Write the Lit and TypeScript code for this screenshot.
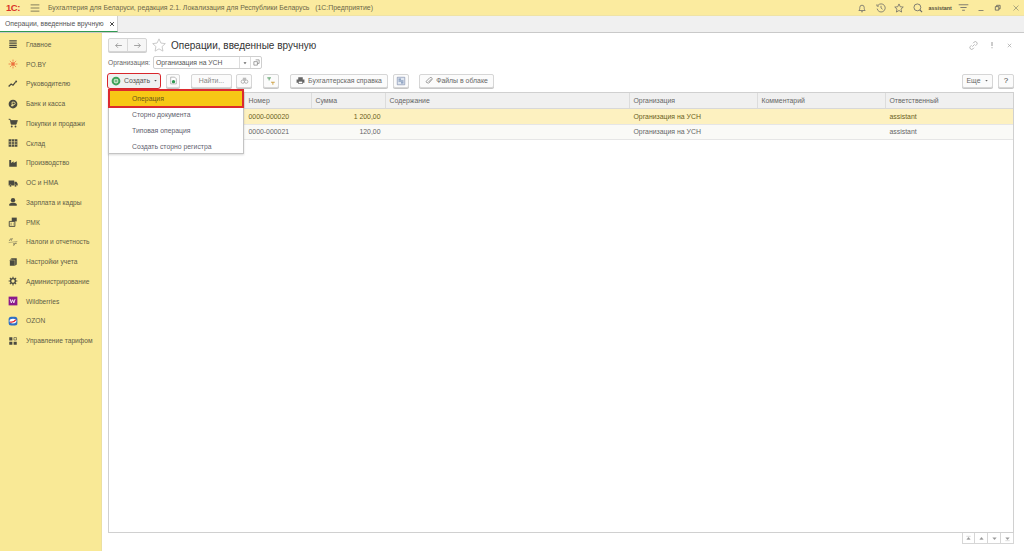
import { LitElement, html, css, svg } from "lit";
import { customElement } from "lit/decorators.js";

const ic = (body: unknown, size = 10, vb = 16) =>
  html`<svg class="ic" width=${size} height=${size} viewBox="0 0 ${vb} ${vb}">${body}</svg>`;
const D = "#4a4a40";

const navIcons: Record<string, unknown> = {
  main: svg`<path d="M2 2h12v2H2zM2 5.500h12v2H2zM2 9h12v2H2zM2 12.500h12v2H2z" fill="${D}"/>`,
  po: svg`<g stroke="#e8572c" stroke-width="1.200" fill="none"><path d="M8 1v14M1 8h14M3 3l10 10M13 3L3 13" stroke-dasharray="2 1"/><circle cx="8" cy="8" r="2"/></g>`,
  ruk: svg`<path d="M1 12l4-4 3 2 4-5" stroke="${D}" stroke-width="2" fill="none"/><circle cx="13" cy="4" r="1.600" fill="${D}"/>`,
  bank: svg`<circle cx="8" cy="8" r="7" fill="${D}"/><path d="M6.500 12V5h3a1.700 1.700 0 010 4h-3M5 10.500h4" stroke="#f9e996" stroke-width="1.300" fill="none"/>`,
  cart: svg`<path d="M1 2h2.500l1.500 8h8l2-6H4" fill="${D}" stroke="${D}" stroke-width="1.200"/><circle cx="6" cy="13.500" r="1.500" fill="${D}"/><circle cx="12" cy="13.500" r="1.500" fill="${D}"/>`,
  sklad: svg`<path d="M1 2h14v12H1z" fill="${D}"/><path d="M1 6h14M1 10h14M5.700 2v12M10.300 2v12" stroke="#f9e996"/>`,
  prod: svg`<path d="M2 14V3h3v5l4-3v3l5-3v9z" fill="${D}"/>`,
  truck: svg`<path d="M1 4h9v8H1zM10.500 6h3l2 3v3h-5z" fill="${D}"/><circle cx="4" cy="12.500" r="1.800" fill="${D}" stroke="#f9e996" stroke-width=".6"/><circle cx="12" cy="12.500" r="1.800" fill="${D}" stroke="#f9e996" stroke-width=".6"/>`,
  person: svg`<circle cx="8" cy="5" r="3.500" fill="${D}"/><path d="M2 14v-2c0-2 3-3 6-3s6 1 6 3v2z" fill="${D}"/>`,
  rmk: svg`<path d="M2 7h9v8H2z" fill="none" stroke="${D}" stroke-width="1.500"/><path d="M6 1h8v6H6z" fill="${D}"/><path d="M4 10h2M8 10h1M4 12.500h2M8 12.500h1" stroke="${D}"/>`,
  tax: svg`<path d="M2 6l3-4M5 6l2-4M9 14l2-4h3M8 11h2" stroke="${D}" stroke-width="1.100" fill="none"/><path d="M1 9l14-2" stroke="${D}" stroke-width=".6"/>`,
  set: svg`<path d="M5 2h9v10l-3 2H3V5z" fill="${D}"/><path d="M5 2v3H3M11 14V5H5" stroke="#f9e996" stroke-width=".6" fill="none"/>`,
  gear: svg`<circle cx="8" cy="8" r="3.800" fill="none" stroke="${D}" stroke-width="2.200"/><path d="M8 1v3M8 12v3M1 8h3M12 8h3M3 3l2 2M11 11l2 2M13 3l-2 2M5 11l-2 2" stroke="${D}" stroke-width="1.800"/>`,
  wb: svg`<rect x="1" y="1" width="14" height="14" fill="#8b1a8b"/><path d="M3.500 5l1.800 6 2-5 2 5 2-6" stroke="#fff" stroke-width="1.400" fill="none"/>`,
  ozon: svg`<rect x="1" y="1" width="14" height="14" rx="4" fill="#2f6fc4"/><ellipse cx="8" cy="8" rx="5.500" ry="3.800" fill="#fff"/><path d="M3.500 9.500c3 1 7-1 9-3.500" stroke="#e3262e" stroke-width="2" fill="none"/>`,
  tariff: svg`<path d="M2 2h5v5H2zM9 9h5v5H9zM2 9h5v5H2z" fill="${D}"/><path d="M9.500 2.500h4v4h-4z" fill="none" stroke="${D}"/>`,
};

const nav: [string, string][] = [
  ["main", "Главное"], ["po", "PO.BY"], ["ruk", "Руководителю"], ["bank", "Банк и касса"],
  ["cart", "Покупки и продажи"], ["sklad", "Склад"], ["prod", "Производство"], ["truck", "ОС и НМА"],
  ["person", "Зарплата и кадры"], ["rmk", "РМК"], ["tax", "Налоги и отчетность"], ["set", "Настройки учета"],
  ["gear", "Администрирование"], ["wb", "Wildberries"], ["ozon", "OZON"], ["tariff", "Управление тарифом"],
];

const cols = ["", "Номер", "Сумма", "Содержание", "Организация", "Комментарий", "Ответственный"];
const rows = [
  ["", "0000-000020", "1 200,00", "", "Организация на УСН", "", "assistant"],
  ["", "0000-000021", "120,00", "", "Организация на УСН", "", "assistant"],
];

@customElement("app-root")
export class AppRoot extends LitElement {
  static styles = css`
    :host { display: block; width: 1024px; height: 551px; overflow: hidden; font-family: "Liberation Sans", Arial, sans-serif; font-size: 6.900px; color: #555; background: #fff; }
    * { box-sizing: border-box; }
    .ic { flex: none; display: block; }
    .app { display: flex; flex-direction: column; height: 551px; position: relative; }
    .top { height: 16px; flex: none; background: #fbeb9f; display: flex; align-items: center; padding: 0 4px 0 6px; color: #6b6648; border-bottom: 1px solid #efe3a6; }
    .logo { color: #d9352a; font-weight: 700; font-size: 9.500px; letter-spacing: -.5px; width: 24px; }
    .burger { width: 18px; }
    .apptitle { flex: 1; white-space: nowrap; font-size: 6.900px; }
    .topr { display: flex; align-items: center; }
    .user { font-size: 5.400px; font-weight: 700; color: #55523c; width: 23px; white-space: nowrap; }
    .gap9 { margin-left: 9px; } .gap8 { margin-left: 8px; } .gap6 { margin-left: 6px; } .gap11 { margin-left: 11.500px; }
    .tabs { height: 17px; flex: none; background: #f0f0f0; border-bottom: 1px solid #c9c9c9; display: flex; }
    .tab { width: 118px; height: 16px; background: #fff; border-right: 1px solid #d0d0d0; border-bottom: 1px solid #2f9a50; display: flex; align-items: center; justify-content: space-between; padding: 0 2px 0 5px; font-size: 6.800px; color: #555; white-space: nowrap; }
    .body { flex: 1; display: flex; min-height: 0; }
    .side { width: 102px; flex: none; background: #f9e996; border-right: 1px solid #ece0a0; padding-top: 1.600px; }
    .nav { height: 19.750px; display: flex; align-items: center; padding-left: 8px; gap: 8px; color: #605c46; font-size: 6.650px; white-space: nowrap; }
    .main { flex: 1; min-width: 0; padding: 5px 10px 7px 6px; display: flex; flex-direction: column; position: relative; }
    .head { height: 14px; display: flex; align-items: center; flex: none; }
    .navbtns { display: flex; width: 39px; height: 14px; border: 1px solid #d5d5d5; border-radius: 2px; background: #f6f6f6; box-shadow: 0 1px 0 #cfcfcf; }
    .navbtns span { flex: 1; display: flex; align-items: center; justify-content: center; }
    .navbtns span + span { border-left: 1px solid #d8d8d8; }
    .star { margin: 0 5px; }
    h1 { margin: 0; font-weight: 400; font-size: 10px; color: #333; flex: 1; white-space: nowrap; }
    .hr { display: flex; gap: 10px; align-items: center; padding-right: 1px; color: #999; }
    .org { height: 13px; margin-top: 4px; display: flex; align-items: center; flex: none; color: #666; }
    .orgl { width: 45px; white-space: nowrap; font-size: 6.700px; }
    .field { width: 109px; height: 13px; border: 1px solid #cfcfcf; border-radius: 2px; display: flex; align-items: center; font-size: 6.800px; color: #555; }
    .field .v { flex: 1; padding-left: 2px; white-space: nowrap; }
    .field .b { width: 11px; height: 11px; border-left: 1px solid #ddd; display: flex; align-items: center; justify-content: center; }
    .toolbar { height: 15px; margin-top: 4px; display: flex; align-items: center; flex: none; position: relative; }
    .btn { height: 14px; border: 1px solid #d6d6d6; border-radius: 2px; background: #fbfbfb; box-shadow: 0 1px 0 #c6c6c6; display: flex; align-items: center; justify-content: center; gap: 3px; white-space: nowrap; color: #666; font-size: 6.900px; flex: none; }
    .create { width: 52px; background: #f0f0f0; position: relative; outline: 1.500px solid #d8262c; border: none; box-shadow: none; padding-left: 1px; color: #555; }
    .grow { flex: 1; }
    .table { margin-top: 4px; flex: 1; min-height: 0; border: 1px solid #d0d0d0; border-top-width: 1.500px; overflow: hidden; }
    .row { display: grid; grid-template-columns: 135.500px 67px 74px 244px 128px 128px 1fr; }
    .th { height: 16px; background: #f0f0f0; border-bottom: 1px solid #d8d8d8; }
    .th span { display: flex; align-items: center; padding-left: 4px; border-right: 1px solid #dcdcdc; color: #666; font-size: 6.900px; }
    .th span:last-child { border-right: 0; }
    .td { height: 15.500px; border-bottom: 1px solid #e6e6e6; }
    .td span { display: flex; align-items: center; padding: 0 4px; white-space: nowrap; color: #666; font-size: 6.900px; }
    .td.sel { background: #fdf1c0; }
    .td.sel span { color: #6b5f20; }
    .td.alt { background: #fafaf7; }
    .td .r { justify-content: flex-end; padding-right: 5px; }
    .pager { height: 11px; flex: none; display: flex; justify-content: flex-end; }
    .pager span { width: 13px; border: 1px solid #d6d6d6; border-top: 0; border-left-width: 0; display: flex; align-items: center; justify-content: center; }
    .pager span:first-child { border-left-width: 1px; }
    .menu { position: absolute; left: 6px; top: 55.500px; width: 136px; height: 65px; background: #fff; border: 1px solid #c4c4c4; box-shadow: 0 1px 2px rgba(0,0,0,.15); color: #5f5f70; font-size: 6.850px; display: flex; flex-direction: column; }
    .mi { height: 16px; display: flex; align-items: center; padding-left: 23px; white-space: nowrap; flex: none; }
    .mi.on { background: #f7c815; color: #6b5618; outline: 2px solid #dc2a2e; outline-offset: -1px; height: 17px; }
  `;

  render() {
    const g = "#8e8e8e";
    return html`<div class="app">
      <div class="top">
        <span class="logo">1С:</span>
        <span class="burger">${ic(svg`<path d="M1 3h14M1 8h14M1 13h14" stroke="#6a6750" stroke-width="1.300"/>`, 10)}</span>
        <span class="apptitle">Бухгалтерия для Беларуси, редакция 2.1. Локализация для Республики Беларусь&nbsp;&nbsp;&nbsp;(1С:Предприятие)</span>
        <div class="topr">
          ${ic(svg`<path d="M3 12c1-1 1.500-2 1.500-5a3.500 3.500 0 017 0c0 3 .5 4 1.500 5zM6.500 14h3" fill="none" stroke="#666" stroke-width="1.200"/>`, 10)}
          <span class="gap9">${ic(svg`<path d="M3 4a6.500 6.500 0 11-1.200 5M8 4.500V8l2.500 2M1.500 2v3h3" fill="none" stroke="#666" stroke-width="1.200"/>`, 10)}</span>
          <span class="gap8">${ic(svg`<path d="M8 1.500l2 4.500 4.800.5-3.600 3.200 1 4.800L8 12l-4.200 2.500 1-4.800L1.200 6.500 6 6z" fill="none" stroke="#666" stroke-width="1.200"/>`, 10)}</span>
          <span class="gap9">${ic(svg`<circle cx="7" cy="7" r="5.500" fill="none" stroke="#666" stroke-width="1.300"/><path d="M11 11l3.500 3.500" stroke="#666" stroke-width="1.800"/>`, 10)}</span>
          <span class="user gap6">assistant</span>
          <span class="gap6">${ic(svg`<path d="M1 4h14M3.500 8h9M6 12h4" stroke="#666" stroke-width="1.200"/>`, 11)}</span>
          <span class="gap8">${ic(svg`<path d="M3 13h10" stroke="#666" stroke-width="1.500"/>`, 8)}</span>
          <span class="gap9">${ic(svg`<path d="M3 6h8v8H3zM6 6V3h8v8h-3" fill="none" stroke="#555" stroke-width="1.700"/>`, 7)}</span>
          <span class="gap11">${ic(svg`<path d="M3 3l10 10M13 3L3 13" stroke="#8a8a70" stroke-width="1.400"/>`, 8)}</span>
        </div>
      </div>
      <div class="tabs"><div class="tab"><span>Операции, введенные вручную</span>${ic(svg`<path d="M3 3l10 10M13 3L3 13" stroke="#333" stroke-width="2.400"/>`, 6)}</div></div>
      <div class="body">
        <div class="side">
          ${nav.map(([k, t]) => html`<div class="nav">${ic(navIcons[k], 10)}<span>${t}</span></div>`)}
        </div>
        <div class="main">
          <div class="head">
            <div class="navbtns">
              <span>${ic(svg`<path d="M14 8H3M7 4L3 8l4 4" fill="none" stroke="${g}" stroke-width="1.400"/>`, 9)}</span>
              <span>${ic(svg`<path d="M2 8h11M9 4l4 4-4 4" fill="none" stroke="${g}" stroke-width="1.400"/>`, 9)}</span>
            </div>
            <span class="star">${ic(svg`<path d="M8 1l2.200 4.800 5 .6-3.700 3.400 1 5.200L8 12.400 3.500 15l1-5.200L.8 6.400l5-.6z" fill="none" stroke="#c4c4c4" stroke-width="1"/>`, 14)}</span>
            <h1>Операции, введенные вручную</h1>
            <div class="hr">
              ${ic(svg`<path d="M6 10l4-4M7 4l2-2a3 3 0 014.500 4.500l-2 2M9 12l-2 2A3 3 0 012.500 9.500l2-2" fill="none" stroke="#999" stroke-width="1.200"/>`, 9)}
              ${ic(svg`<path d="M8 2v8M8 12.500v2" stroke="#777" stroke-width="1.500"/>`, 8)}
              ${ic(svg`<path d="M4 4l8 8M12 4l-8 8" stroke="#999" stroke-width="1.400"/>`, 7)}
            </div>
          </div>
          <div class="org">
            <span class="orgl">Организация:</span>
            <div class="field"><span class="v">Организация на УСН</span>
              <span class="b">${ic(svg`<path d="M4 6h8l-4 5z" fill="#666"/>`, 6)}</span>
              <span class="b">${ic(svg`<path d="M6 2h8v8h-4M2 6h8v8H2z" fill="none" stroke="#777" stroke-width="1.500"/>`, 7)}</span>
            </div>
          </div>
          <div class="toolbar">
            <div class="btn create">${ic(svg`<circle cx="8" cy="8" r="7" fill="#3fa35a"/><circle cx="8" cy="8" r="3.800" fill="#dff0d8"/><path d="M8 5.500v5M5.500 8h5" stroke="#3fa35a" stroke-width="1.300"/>`, 10)}<span>Создать</span>${ic(svg`<path d="M4 6h8l-4 5z" fill="#555"/>`, 5)}</div>
            <div class="btn" style="width:14px;margin-left:6px">${ic(svg`<path d="M3 2h7l3 3v9H3z" fill="#fff" stroke="#888"/><circle cx="8" cy="10" r="3" fill="#2f9a50"/>`, 9)}</div>
            <div class="btn" style="width:41px;margin-left:11px;color:#888">Найти...</div>
            <div class="btn" style="width:16px;margin-left:4px">${ic(svg`<circle cx="5" cy="10" r="3" fill="none" stroke="#aaa" stroke-width="1.500"/><circle cx="11" cy="10" r="3" fill="none" stroke="#aaa" stroke-width="1.500"/><path d="M5 3h6v5H5z" fill="#bbb"/>`, 9)}</div>
            <div class="btn" style="width:16px;margin-left:11px">${ic(svg`<path d="M2 3h6M5 3v4" stroke="#3a8f4e" stroke-width="1.300"/><path d="M8 10h6M11 10v4" stroke="#c8942a" stroke-width="1.300"/>`, 10)}</div>
            <div class="btn" style="width:98px;margin-left:11px">${ic(svg`<path d="M4 2h8v4H4zM1 6h14v6h-3v2H4v-2H1z" fill="#666"/><path d="M5 10h6v3H5z" fill="#fff"/>`, 9)}<span>Бухгалтерская справка</span></div>
            <div class="btn" style="width:16px;margin-left:5px">${ic(svg`<path d="M2 2h12v12H2z" fill="#dfe6f0" stroke="#7a8aa8"/><path d="M4 5h4M4 8h8M8 11h4" stroke="#4a6a9a" stroke-width="1.300"/>`, 10)}</div>
            <div class="btn" style="width:75px;margin-left:10px">${ic(svg`<path d="M13 4L6 11a2 2 0 01-3-3l7-7a3 3 0 014 4l-7 8" fill="none" stroke="#888" stroke-width="1.600"/>`, 8)}<span>Файлы в облаке</span></div>
            <span class="grow"></span>
            <div class="btn" style="width:31px">Еще ${ic(svg`<path d="M4 6h8l-4 5z" fill="#666"/>`, 5)}</div>
            <div class="btn" style="width:16px;margin-left:5px;color:#444;font-size:8px">?</div>
          </div>
          <div class="table">
            <div class="row th">${cols.map((c) => html`<span>${c}</span>`)}</div>
            ${rows.map((r, i) => html`<div class="row td ${i === 0 ? "sel" : "alt"}">${r.map((c, j) => html`<span class=${j === 2 ? "r" : ""}>${c}</span>`)}</div>`)}
          </div>
          <div class="pager">
            ${[
              "M3 3h10M8 5l-4 5h8z",
              "M8 5l-4 5h8z",
              "M8 11L4 6h8z",
              "M3 13h10M8 11L4 6h8z",
            ].map((d) => html`<span>${ic(svg`<path d="${d}" fill="#999" stroke="#999" stroke-width=".8"/>`, 7)}</span>`)}
          </div>
          <div class="menu">
            <div class="mi on">Операция</div>
            <div class="mi">Сторно документа</div>
            <div class="mi">Типовая операция</div>
            <div class="mi">Создать сторно регистра</div>
          </div>
        </div>
      </div>
    </div>`;
  }
}
